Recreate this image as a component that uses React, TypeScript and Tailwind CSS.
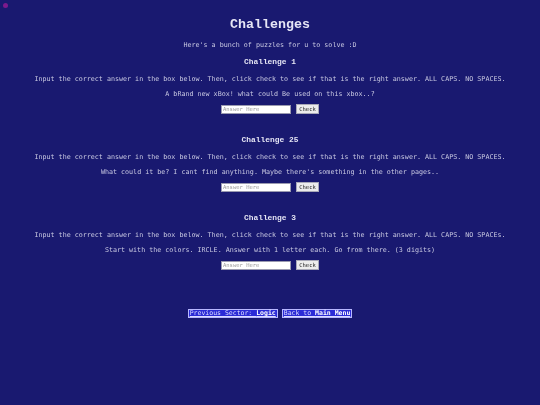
import React from 'react'

const challenges = [
  {
    title: 'Challenge 1',
    rules:
      'Input the correct answer in the box below. Then, click check to see if that is the right answer. ALL CAPS. NO SPACES.',
    hint: 'A bRand new xBox! what could Be used on this xbox..?',
  },
  {
    title: 'Challenge 25',
    rules:
      'Input the correct answer in the box below. Then, click check to see if that is the right answer. ALL CAPS. NO SPACES.',
    hint: "What could it be? I cant find anything. Maybe there's something in the other pages..",
  },
  {
    title: 'Challenge 3',
    rules:
      'Input the correct answer in the box below. Then, click check to see if that is the right answer. ALL CAPS. NO SPACEs.',
    hint: 'Start with the colors. IRCLE. Answer with 1 letter each. Go from there. (3 digits)',
  },
]

const mono = "font-['DejaVu_Sans_Mono',monospace]"
const courier = "font-['Liberation_Mono','Courier_New',monospace]"

function Challenge({ title, rules, hint }: { title: string; rules: string; hint: string }) {
  return (
    <div className="flex flex-col items-center">
      <h3 className={`${courier} h-[12px] text-[7.9px] font-bold leading-[12px] text-[#e4e4f4]`}>{title}</h3>
      <p className={`${mono} mt-[6px] h-[10px] whitespace-nowrap text-[6.7px] leading-[10px] text-[#c9c9e2]`}>{rules}</p>
      <p className={`${mono} mt-[5px] h-[10px] whitespace-nowrap text-[6.7px] leading-[10px] text-[#c9c9e2]`}>{hint}</p>
      <div className="mt-[5px] flex h-[10px] items-center gap-[5px]">
        <input
          placeholder="Answer Here"
          className={`${mono} h-[9px] w-[70px] border border-[#9a9ab0] bg-white px-[1px] text-[5.5px] leading-[7px] text-black outline-none placeholder:text-[#9a9a9a]`}
        />
        <button
          className={`${mono} h-[10px] w-[23px] border border-[#a8a8b8] bg-[#ececec] text-[5.5px] leading-[8px] text-[#202020]`}
        >
          Check
        </button>
      </div>
    </div>
  )
}

export default function App() {
  return (
    <div className="relative h-screen w-full bg-[#191970]">
      {/* little dot top-left */}
      <div className="absolute left-[3px] top-[3px] h-[5px] w-[5px] rounded-full bg-[#7d1a8c]" />

      <div className="flex flex-col items-center pt-[17px] will-change-transform">
        <h1 className={`${courier} h-[16px] text-[13.3px] font-bold leading-[16px] text-[#e6e6f6]`}>Challenges</h1>
        <p className={`${mono} mt-[7px] h-[10px] text-[6.7px] leading-[10px] text-[#c9c9e2]`}>
          Here's a bunch of puzzles for u to solve :D
        </p>

        <div className="mt-[6px] flex flex-col gap-[20px]">
          {challenges.map((c) => (
            <Challenge key={c.title} {...c} />
          ))}
        </div>

        <div className="mt-[39px] flex gap-[4px]">
          <button
            className={`${mono} h-[9px] border border-[#b8b8ff] bg-[#2b2bd6] px-[1px] text-[6.5px] leading-[7px] text-[#dcdcff] underline`}
          >
            Previous Sector: <b className="text-white">Logic</b>
          </button>
          <button
            className={`${mono} h-[9px] border border-[#b8b8ff] bg-[#2b2bd6] px-[1px] text-[6.5px] leading-[7px] text-[#dcdcff] underline`}
          >
            Back to <b className="text-white">Main Menu</b>
          </button>
        </div>
      </div>
    </div>
  )
}
